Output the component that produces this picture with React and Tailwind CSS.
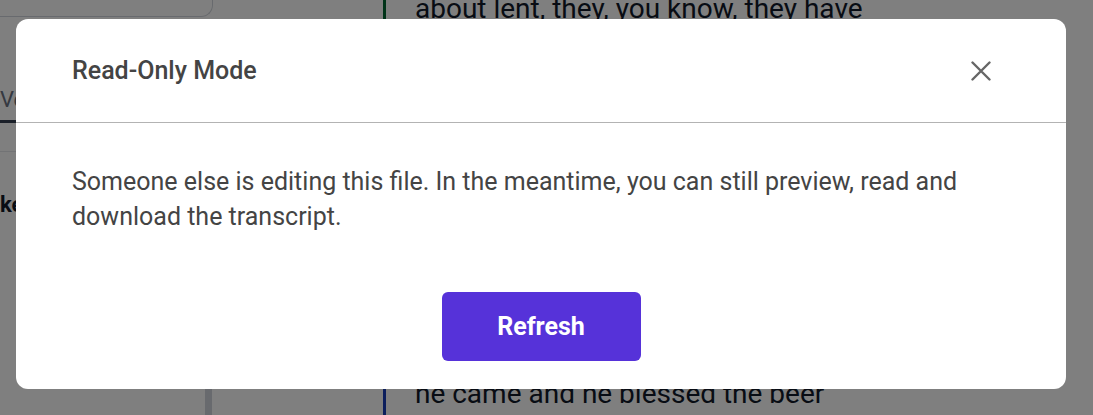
import React from 'react';

const Background = () => (
    <div className="relative h-[415px] w-full overflow-hidden bg-white font-['Roboto',sans-serif]">
        <div className="flex h-full">
            {/* Left sidebar */}
            <div className="flex w-[205px] flex-col">
                <div className="h-[17px] w-[213px] rounded-br-[12px] border-b border-r border-gray-300" />
                <div className="mt-[66px] text-[22px] text-gray-500">Ve</div>
                <div className="mt-[4px] h-[3px] w-[120px] bg-gray-700" />
                <div className="mt-[28px] h-px w-full bg-gray-200" />
                <div className="mt-[36px] text-[22px] font-bold text-gray-900">ke</div>
            </div>
            <div className="h-[26px] w-[7px] self-end bg-gray-300" />
            <div className="w-[88px]" />
            {/* Transcript */}
            <div className="flex flex-1 flex-col justify-between pl-[83px]">
                <div className="flex h-[20px] items-end">
                    <div className="h-full w-[3px] bg-green-800" />
                    <div className="-mb-[3px] pl-[29px] text-[28px] leading-none text-gray-900">about lent, they, you know, they have</div>
                </div>
                <div className="flex h-[40px]">
                    <div className="mt-[14px] w-[3px] bg-blue-800" />
                    <div className="pl-[29px] pt-[5px] text-[28px] leading-none text-gray-900">he came and he blessed the beer</div>
                </div>
            </div>
        </div>
    </div>
);

const App = () => {
    return (
        <div className="relative h-[415px] w-[1093px] overflow-hidden">
            <Background />

            {/* Overlay */}
            <div className="absolute inset-0 bg-black/50 pl-[16px] pt-[19px]">
                <div className="flex h-[370px] w-[1050px] flex-col rounded-[12px] bg-white font-['Roboto',sans-serif]">
                    <div className="flex h-[104px] items-center justify-between border-b border-[#b3b3b3] pl-[56px] pr-[75px]">
                        <h2 className="text-[25px] font-medium text-[#444]">Read-Only Mode</h2>
                        <button className="text-[#666]">
                            <svg width="20" height="20" viewBox="0 0 20 20" fill="none" stroke="currentColor" strokeWidth="2.4" strokeLinecap="round">
                                <path d="M1.5 1.5L18.5 18.5M18.5 1.5L1.5 18.5" />
                            </svg>
                        </button>
                    </div>

                    <div className="flex flex-1 flex-col px-[56px] pt-[41px] pb-[28px]">
                        <p className="text-[25px] leading-[35px] text-[#444]">
                            Someone else is editing this file. In the meantime, you can still preview, read and download the transcript.
                        </p>
                        <div className="mt-auto flex justify-center">
                            <button className="h-[69px] w-[199px] rounded-[6px] bg-[#5632d9] text-[25px] font-bold text-white">
                                Refresh
                            </button>
                        </div>
                    </div>
                </div>
            </div>
        </div>
    );
};

export default App;
